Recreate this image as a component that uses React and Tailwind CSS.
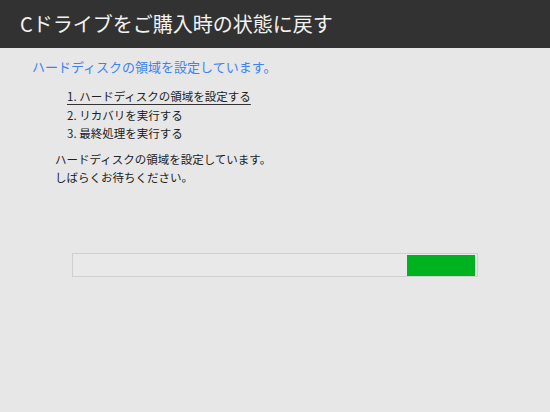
import React from 'react';

const steps = [
    { label: '1. ハードディスクの領域を設定する', active: true },
    { label: '2. リカバリを実行する' },
    { label: '3. 最終処理を実行する' },
];

const App = () => (
    <div className="w-[550px] h-[412px] bg-[#e7e7e7] overflow-hidden flex flex-col font-['Noto_Sans_CJK_JP',sans-serif]">
        {/* Header */}
        <header className="h-[48px] shrink-0 bg-[#323232] flex items-center pl-[20px]">
            <h1 className="text-[20px] leading-none text-[#f2f2f2]">
                Cドライブをご購入時の状態に戻す
            </h1>
        </header>

        <main className="flex flex-col pt-[9px]">
            <p className="pl-[32px] text-[13px] leading-[20px] text-[#3d82f0]">
                ハードディスクの領域を設定しています。
            </p>

            <ol className="pl-[67px] mt-[10px] flex flex-col text-[11.5px] leading-[18.5px] text-[#222]">
                {steps.map((s) => (
                    <li key={s.label}>
                        <span className={s.active ? 'underline underline-offset-[3px] decoration-[#333]' : ''}>
                            {s.label}
                        </span>
                    </li>
                ))}
            </ol>

            <div className="pl-[55px] mt-[7px] text-[11.5px] leading-[18px] text-[#222]">
                <p>ハードディスクの領域を設定しています。</p>
                <p>しばらくお待ちください。</p>
            </div>

            {/* Progress */}
            <div className="ml-[72px] mt-[67px] w-[406px] h-[24px] border border-[#cfcfcf] bg-[#e9e9e9] flex justify-end pt-[1px] pr-[2px]">
                <div className="w-[68px] h-full bg-[#00b21f]" />
            </div>
        </main>
    </div>
);

export default App;
